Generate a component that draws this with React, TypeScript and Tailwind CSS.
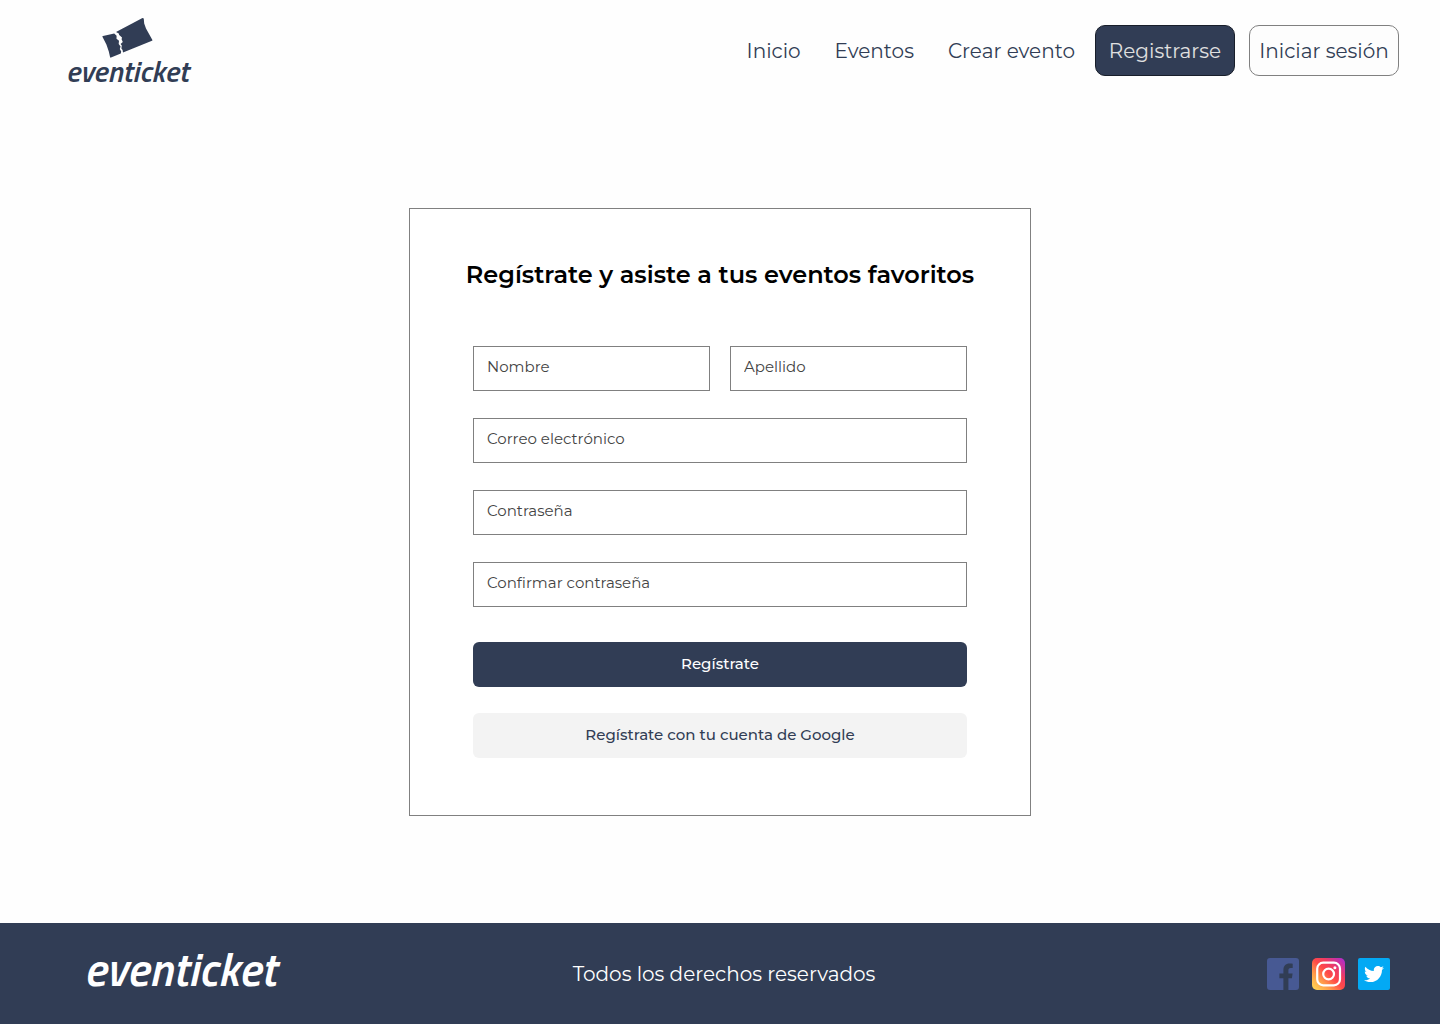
import React from "react";
import { FaTwitter } from "react-icons/fa";

function TicketMark() {
  return (
    <svg width="54" height="42" viewBox="0 -1 54 42" className="fill-[#313d55]" aria-hidden="true">
      <path d="M2.3 19.6Q2.4 19 3 18.9L14.2 16.4 16.6 18.8 16.5 21.8 19 23.8 18.7 27 20.6 29.4 19.8 32 21.2 34.4 20.8 36.4 11 40.6Q10.4 40.8 10.1 40.2L8.8 34.4 6.4 27.6Z" />
      <path d="M16 15 42 1.2Q43.5.4 43.8 2L44.2 6.4 46 11.6 52.4 22.9Q52.6 23.5 52 23.8L23 35.4 22.6 33 21.4 31.4 21.8 28.4 20.6 27 22.8 25 21.6 22.2 22 20.4 19.2 18 18.8 16.4Z" />
    </svg>
  );
}

function FacebookIcon() {
  return (
    <svg width="32" height="32" viewBox="0 0 32 32" aria-hidden="true">
      <rect width="32" height="32" rx="3" fill="#475993" />
      <path
        d="M16.4 32V20.2h-4v-4.8h4v-3.2c0-4.3 2.3-6.7 6.1-6.7 1.4 0 2.4.1 3.2.3v4.2h-2.1c-1.8 0-2.2 1-2.2 2.6v2.8h4.2l-.7 4.8h-3.5V32Z"
        fill="#313d55"
      />
    </svg>
  );
}

function InstagramIcon() {
  return (
    <svg width="33" height="32" viewBox="0 0 33 32" aria-hidden="true">
      <defs>
        <linearGradient id="ig" x1="0.06" y1="0.94" x2="0.94" y2="0.06">
          <stop offset="0" stopColor="#ffd053" />
          <stop offset="0.26" stopColor="#ff9a4a" />
          <stop offset="0.5" stopColor="#ff4a48" />
          <stop offset="0.7" stopColor="#ef3c62" />
          <stop offset="1" stopColor="#b62ec4" />
        </linearGradient>
      </defs>
      <rect width="33" height="32" rx="5" fill="url(#ig)" />
      <g fill="none" stroke="#fff" strokeWidth="2.2">
        <rect x="5.2" y="4.7" width="22.8" height="22.6" rx="6" />
        <circle cx="16.6" cy="16" r="5.4" />
      </g>
      <circle cx="22.9" cy="9.8" r="1.5" fill="#fff" />
    </svg>
  );
}

function Field({ label, type = "text", name }: { label: string; type?: string; name: string }) {
  return (
    <input
      type={type}
      name={name}
      aria-label={label}
      placeholder={label}
      className="block h-[45px] w-full min-w-0 border border-[#808080] bg-white px-[13px] pb-1 text-[15px] text-[#444] placeholder:text-[#444]"
    />
  );
}

export default function App() {
  return (
    <div className="flex min-h-screen flex-col bg-[#fefefe] font-['Montserrat','Inter',sans-serif]">
      <header className="flex items-center justify-between py-4 pr-[41px] pl-[66px]">
        <a href="#" className="flex flex-col items-center text-[#313d55]">
          <TicketMark />
          <span className="font-['Titillium_Web','Roboto',sans-serif] text-[30px] leading-[27px] font-semibold italic">eventicket</span>
        </a>
        <nav className="flex items-center text-xl text-[#313d55]">
          <div className="mr-5 flex gap-[34px]">
            <a href="#inicio">Inicio</a>
            <a href="#eventos">Eventos</a>
            <a href="#crear">Crear evento</a>
          </div>
          <button type="button" className="mr-[14px] h-[51px] w-[140px] rounded-[10px] border border-[#181e2a] bg-[#313d55] text-[#e0e0e0]">
            Registrarse
          </button>
          <button type="button" className="h-[51px] w-[150px] rounded-[10px] border border-[#808080] bg-[#fdfdfd]">
            Iniciar sesión
          </button>
        </nav>
      </header>

      <main className="flex flex-1 items-center justify-center">
        <form className="w-[622px] border border-[#808080] bg-white px-8 pt-[51px] pb-[57px]" onSubmit={(e) => e.preventDefault()}>
          <h1 className="text-center text-2xl leading-[30px] font-semibold whitespace-nowrap text-black">
            Regístrate y asiste a tus eventos favoritos
          </h1>
          <div className="mx-[31px] mt-14 flex flex-col gap-[27px]">
            <div className="flex gap-5">
              <Field label="Nombre" name="nombre" />
              <Field label="Apellido" name="apellido" />
            </div>
            <Field label="Correo electrónico" type="email" name="correo" />
            <Field label="Contraseña" type="password" name="contrasena" />
            <Field label="Confirmar contraseña" type="password" name="confirmar" />
          </div>
          <div className="mx-[31px] mt-[35px] flex flex-col gap-[26px] text-[15px] font-medium">
            <button type="submit" className="h-[45px] rounded-md bg-[#313d55] text-white">
              Regístrate
            </button>
            <button type="button" className="h-[45px] rounded-md bg-[#f3f3f3] text-[#313d55]">
              Regístrate con tu cuenta de Google
            </button>
          </div>
        </form>
      </main>

      <footer className="grid h-[101px] grid-cols-[1fr_auto_1fr] items-center bg-[#313d55] pr-[50px] pl-[58px] text-white">
        <a href="#" className="pb-[10px] pl-[26px] font-['Titillium_Web','Roboto',sans-serif] text-[47px] leading-none font-semibold italic">
          eventicket
        </a>
        <p className="text-xl">Todos los derechos reservados</p>
        <div className="flex justify-end gap-[13px]">
          <a href="#facebook" aria-label="Facebook">
            <FacebookIcon />
          </a>
          <a href="#instagram" aria-label="Instagram">
            <InstagramIcon />
          </a>
          <a href="#twitter" aria-label="Twitter" className="flex size-8 items-center justify-center rounded-xs bg-[#03a9f4]">
            <FaTwitter size={20} />
          </a>
        </div>
      </footer>
    </div>
  );
}
